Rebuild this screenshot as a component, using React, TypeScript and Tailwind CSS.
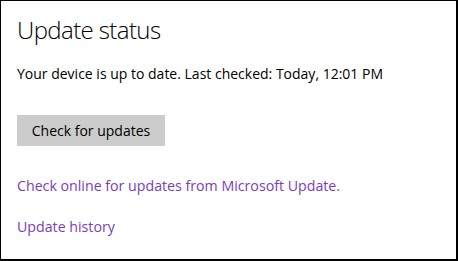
export default function App() {
  return (
    <div
      className="w-[458px] h-[261px] bg-white border-l border-t border-r-2 border-b-2 border-black pl-[16px] pt-[13px] text-[#000]"
      style={{ fontFamily: '"Open Sans", "Noto Sans", sans-serif' }}
    >
      <h1 className="text-[24px] leading-[32px] font-light tracking-[-0.6px]">Update status</h1>
      <p className="mt-[18px] text-[14px] leading-[20px]">
        Your device is up to date. Last checked: Today, 12:01 PM
      </p>
      <button className="mt-[31px] block w-[148px] h-[31px] bg-[#cccccc] text-[14px] leading-[20px]">
        Check for updates
      </button>
      <a href="#" className="mt-[30px] block text-[14.2px] leading-[20px] text-[#7a3dbd]">
        Check online for updates from Microsoft Update.
      </a>
      <a href="#" className="mt-[21px] block w-fit text-[14.2px] leading-[20px] text-[#7a3dbd]">
        Update history
      </a>
    </div>
  );
}
